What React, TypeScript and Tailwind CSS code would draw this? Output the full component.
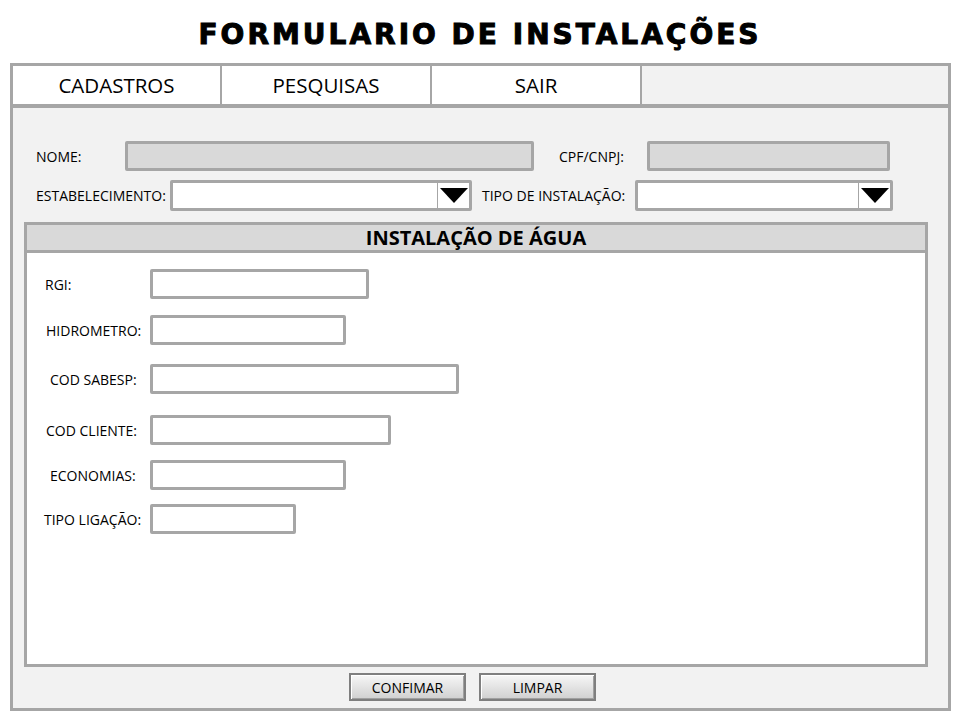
import React from 'react';

const font = { fontFamily: '"Open Sans", "Noto Sans", sans-serif' };

function Field({ width, gray = false }: { width: string; gray?: boolean }) {
    return (
        <div
            className={`h-[30px] ${width} border-[3px] border-[#a6a6a6] rounded-[2px] ${gray ? 'bg-[#d9d9d9]' : 'bg-white'}`}
        />
    );
}

function Select({ width }: { width: string }) {
    return (
        <div className={`h-[31px] ${width} border-[3px] border-[#a6a6a6] rounded-[2px] bg-white flex justify-end`}>
            <div className="w-[32px] h-full border-l border-[#a6a6a6] flex items-center justify-center">
                <svg width="28" height="15" viewBox="0 0 28 15">
                    <polygon points="0,0 28,0 14,15" fill="#000" />
                </svg>
            </div>
        </div>
    );
}

const waterFields = [
    { label: 'RGI:', pl: 'pl-[18px]', width: 'w-[219px]', mt: 'mt-[16px]' },
    { label: 'HIDROMETRO:', pl: 'pl-[19px]', width: 'w-[196px]', mt: 'mt-[16px]' },
    { label: 'COD SABESP:', pl: 'pl-[23px]', width: 'w-[309px]', mt: 'mt-[19px]' },
    { label: 'COD CLIENTE:', pl: 'pl-[19px]', width: 'w-[241px]', mt: 'mt-[21px]' },
    { label: 'ECONOMIAS:', pl: 'pl-[23px]', width: 'w-[196px]', mt: 'mt-[15px]' },
    { label: 'TIPO LIGAÇÃO:', pl: 'pl-[17px]', width: 'w-[146px]', mt: 'mt-[14px]' },
];

export default function App() {
    return (
        <div className="w-[960px] h-[720px] bg-white text-black overflow-hidden" style={font}>
            {/* Title */}
            <div className="h-[63px] flex items-center justify-center pt-[7px]">
                <h1
                    className="text-[28px] leading-none font-bold tracking-[3px] [-webkit-text-stroke:1px_black]"
                    style={{ fontFamily: '"DejaVu Sans", Verdana, sans-serif' }}
                >
                    FORMULARIO DE INSTALAÇÕES
                </h1>
            </div>

            {/* Frame */}
            <div className="ml-[10px] w-[941px] h-[648px] border-[3px] border-[#a6a6a6] bg-[#f2f2f2] flex flex-col">
                {/* Menu */}
                <div className="h-[42px] flex border-b-4 border-[#a6a6a6] shrink-0">
                    {['CADASTROS', 'PESQUISAS', 'SAIR'].map((t) => (
                        <div
                            key={t}
                            className={`${t === 'CADASTROS' ? 'w-[209px]' : 'w-[210px]'} h-full bg-white border-r-2 border-[#a6a6a6] flex items-center justify-center text-[20.5px] pt-[1px]`}
                        >
                            {t}
                        </div>
                    ))}
                </div>

                {/* Row 1 */}
                <div className="mt-[33px] pl-[23px] flex items-center text-[14px]">
                    <span className="w-[89px]">NOME:</span>
                    <Field width="w-[409px]" gray />
                    <span className="ml-[25px] w-[88px]">CPF/CNPJ:</span>
                    <Field width="w-[243px]" gray />
                </div>

                {/* Row 2 */}
                <div className="mt-[9px] pl-[23px] flex items-center text-[14px]">
                    <span className="w-[134px]">ESTABELECIMENTO:</span>
                    <Select width="w-[302px]" />
                    <span className="ml-[10px] w-[153px]">TIPO DE INSTALAÇÃO:</span>
                    <Select width="w-[258px]" />
                </div>

                {/* Section */}
                <div className="mt-[11px] ml-[11px] w-[904px] h-[445px] border-[3px] border-[#a6a6a6] bg-white flex flex-col">
                    <div className="h-[28px] bg-[#d9d9d9] border-b-[3px] border-[#a6a6a6] flex items-center justify-center text-[20px] font-bold shrink-0">
                        INSTALAÇÃO DE ÁGUA
                    </div>
                    <div className="flex flex-col">
                        {waterFields.map((f) => (
                            <div key={f.label} className={`${f.mt} flex items-center text-[14px]`}>
                                <div className="w-[123px]">
                                    <span className={`${f.pl} block`}>{f.label}</span>
                                </div>
                                <Field width={f.width} />
                            </div>
                        ))}
                    </div>
                </div>

                {/* Buttons */}
                <div className="mt-[6px] pl-[336px] flex gap-[13px] text-[14px]">
                    {['CONFIMAR', 'LIMPAR'].map((b) => (
                        <div
                            key={b}
                            className="h-[28px] w-[117px] border-2 border-[#7f7f7f] bg-gradient-to-b from-[#f7f7f7] to-[#d0d0d0] shadow-[inset_1px_1px_0_#ffffff,inset_-1px_-1px_0_#a0a0a0] flex items-center justify-center"
                        >
                            {b}
                        </div>
                    ))}
                </div>
            </div>
        </div>
    );
}
